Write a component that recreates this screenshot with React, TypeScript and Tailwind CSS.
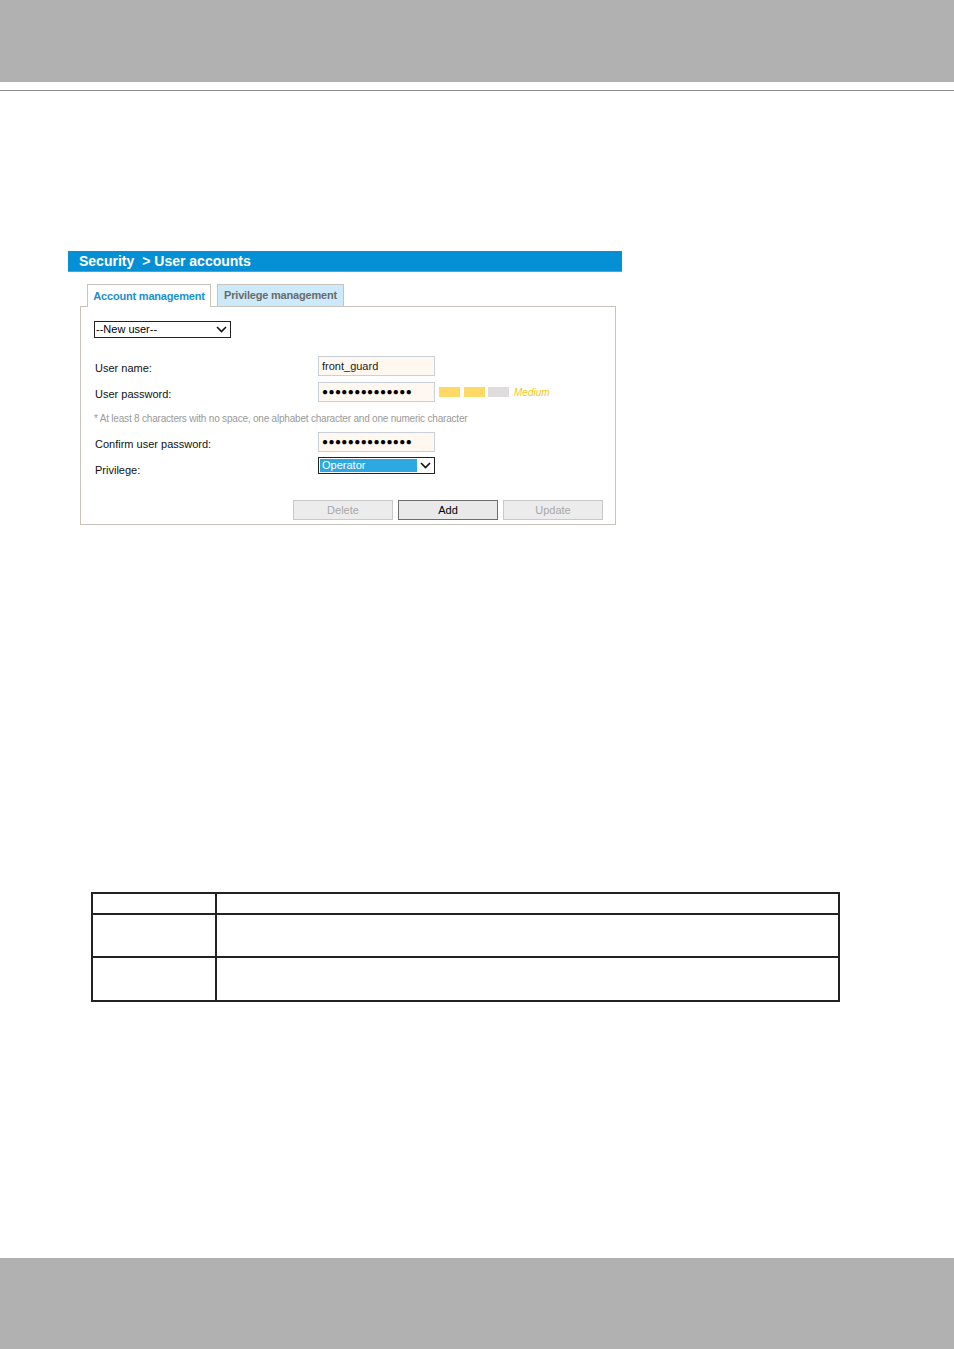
import React from "react";

const dots = "\u25CF".repeat(14);

function Pw() {
  return (
    <div className="w-[117px] h-[20px] border border-[#c9d0da] bg-[#fff8f0] flex items-center pl-[3px] text-[10px] tracking-[0.4px] text-black leading-none whitespace-nowrap overflow-hidden">
      {dots}
    </div>
  );
}

export default function App() {
  return (
    <div className="w-[954px] h-[1349px] bg-white flex flex-col relative" style={{ fontFamily: '"Liberation Sans", Arial, sans-serif' }}>
      <div className="h-[82px] bg-[#b1b1b1] shrink-0" />
      <div className="h-[8px] shrink-0" />
      <div className="h-[1px] bg-[#8c8c8c] shrink-0" />
      <div className="h-[160px] shrink-0" />
      {/* UI screenshot */}
      <div className="ml-[68px] w-[554px]">
        <div className="h-[21px] bg-[#0590d6] border-b border-[#3fa9e3] flex items-center pl-[11px] text-white font-bold text-[14px] leading-none">
          <span>Security</span>
          <span className="ml-[8px]">&gt; User accounts</span>
        </div>
        <div className="ml-[12px] mt-[12px] w-[536px]">
          <div className="flex items-end gap-[6px] pl-[7px] h-[22px]">
            <div className="h-[23px] border border-b-0 border-[#c8c4bc] bg-white flex items-center text-[11px] font-bold text-[#1a8fd0] relative top-[1px] w-[124px] justify-center whitespace-nowrap tracking-[-0.2px]">
              Account management
            </div>
            <div className="h-[22px] border border-b-0 border-[#c8c4bc] bg-[#cdeafc] flex items-center text-[11px] font-bold text-[#6a6a6a] w-[127px] justify-center whitespace-nowrap tracking-[-0.2px]">
              Privilege management
            </div>
          </div>
          <div className="border border-[#c8c4bc] h-[219px] pt-[14px] pl-[13px] pr-[12px] text-[11px] text-[#111]">
            <div className="w-[137px] h-[17px] border border-[#222] flex items-center justify-between pl-[1px] pr-[3px] text-[11px] text-black">
              <span>--New user--</span>
              <svg width="11" height="7" viewBox="0 0 11 7"><path d="M1 1l4.5 4.5L10 1" fill="none" stroke="#111" strokeWidth="1.6" /></svg>
            </div>
            <div className="mt-[18px] flex items-center h-[20px]">
              <span className="w-[224px] pl-[1px] pt-[4px]">User name:</span>
              <div className="w-[117px] h-[20px] border border-[#c9d0da] bg-[#fff8f0] flex items-center pl-[3px] text-[11px] text-[#222]">front_guard</div>
            </div>
            <div className="mt-[6px] flex items-center h-[20px]">
              <span className="w-[224px] pl-[1px] pt-[4px]">User password:</span>
              <Pw />
              <div className="ml-[4px] w-[21px] h-[10px] bg-[#ffd966]" />
              <div className="ml-[4px] w-[21px] h-[10px] bg-[#ffd966]" />
              <div className="ml-[3px] w-[21px] h-[10px] bg-[#dedcdc]" />
              <span className="ml-[5px] italic text-[10px] text-[#f5c518]">Medium</span>
            </div>
            <div className="mt-[11px] h-[12px] text-[10px] text-[#9a9a9a] leading-[12px] tracking-[-0.2px]">
              * At least 8 characters with no space, one alphabet character and one numeric character
            </div>
            <div className="mt-[7px] flex items-center h-[20px]">
              <span className="w-[224px] pl-[1px] pt-[4px]">Confirm user password:</span>
              <Pw />
            </div>
            <div className="mt-[5px] flex items-start h-[20px]">
              <span className="w-[224px] pl-[1px] pt-[5px]">Privilege:</span>
              <div className="w-[117px] h-[17px] border border-[#222] flex items-center pl-[1px] pr-[3px] justify-between">
                <div className="w-[97px] h-[13px] bg-[#2ea8e0] text-white text-[11px] leading-[13px] pl-[2px]">Operator</div>
                <svg width="11" height="7" viewBox="0 0 11 7"><path d="M1 1l4.5 4.5L10 1" fill="none" stroke="#111" strokeWidth="1.6" /></svg>
              </div>
            </div>
            <div className="mt-[23px] flex justify-end gap-[5px] pr-[0px]">
              <div className="w-[100px] h-[20px] border border-[#c9c9c9] bg-[#ececec] flex items-center justify-center text-[11px] text-[#a8a8a8]">Delete</div>
              <div className="w-[100px] h-[20px] border border-[#6e6e6e] bg-[#e9e9e9] flex items-center justify-center text-[11px] text-black">Add</div>
              <div className="w-[100px] h-[20px] border border-[#c9c9c9] bg-[#ececec] flex items-center justify-center text-[11px] text-[#a8a8a8]">Update</div>
            </div>
          </div>
        </div>
      </div>
      <div className="h-[367px] shrink-0" />
      {/* Table */}
      <div className="ml-[91px] w-[749px] border-2 border-[#222] grid grid-cols-[124px_1fr]">
        <div className="h-[21px] border-r-2 border-b-2 border-[#222]" />
        <div className="h-[21px] border-b-2 border-[#222]" />
        <div className="h-[43px] border-r-2 border-b-2 border-[#222]" />
        <div className="h-[43px] border-b-2 border-[#222]" />
        <div className="h-[42px] border-r-2 border-[#222]" />
        <div className="h-[42px]" />
      </div>
      <div className="flex-1" />
      <div className="h-[91px] bg-[#b1b1b1] shrink-0" />
    </div>
  );
}
